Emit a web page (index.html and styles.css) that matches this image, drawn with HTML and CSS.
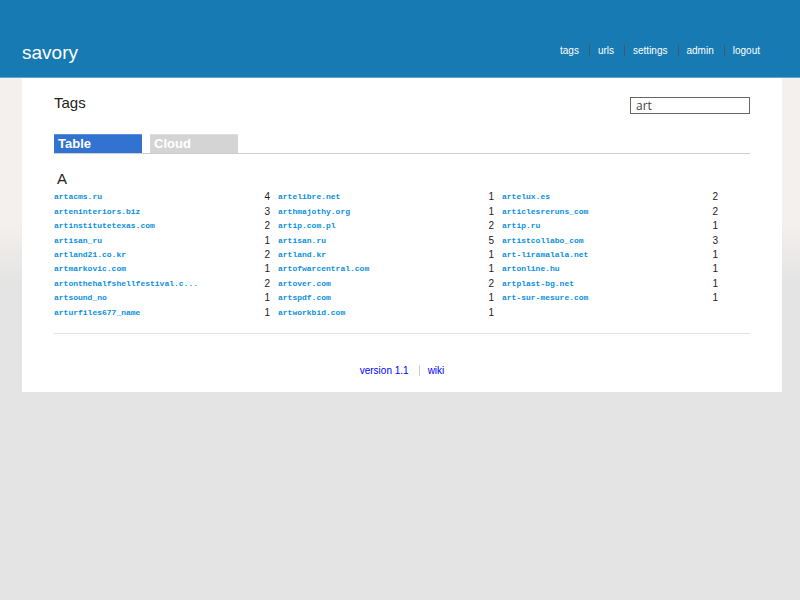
FILE: index.html
```html
<!DOCTYPE html>
<html lang="en">
<head>
<meta charset="utf-8">
<meta name="viewport" content="width=device-width, initial-scale=1">
<title>savory - Tags</title>
<link rel="stylesheet" href="styles.css">
</head>
<body>
<header class="banner">
  <a class="brand" href="#">savory</a>
  <nav class="links">
    <a href="#">tags</a>
    <a href="#">urls</a>
    <a href="#">settings</a>
    <a href="#">admin</a>
    <a href="#">logout</a>
  </nav>
</header>
<main class="page">
  <div class="heading">
    <h1>Tags</h1>
    <input class="search" type="text" value="art" aria-label="Filter tags">
  </div>
  <nav class="tabs">
    <a class="tab active" href="#">Table</a>
    <a class="tab" href="#">Cloud</a>
  </nav>
  <section class="group">
    <h2>A</h2>
    <table class="tags">
      <colgroup><col><col class="count"><col><col class="count"><col><col class="count"></colgroup>
      <tbody>
        <tr><td><a href="#">artacms.ru</a></td><td>4</td><td><a href="#">artelibre.net</a></td><td>1</td><td><a href="#">artelux.es</a></td><td>2</td></tr>
        <tr><td><a href="#">arteninteriors.biz</a></td><td>3</td><td><a href="#">arthmajothy.org</a></td><td>1</td><td><a href="#">articlesreruns_com</a></td><td>2</td></tr>
        <tr><td><a href="#">artinstitutetexas.com</a></td><td>2</td><td><a href="#">artip.com.pl</a></td><td>2</td><td><a href="#">artip.ru</a></td><td>1</td></tr>
        <tr><td><a href="#">artisan_ru</a></td><td>1</td><td><a href="#">artisan.ru</a></td><td>5</td><td><a href="#">artistcollabo_com</a></td><td>3</td></tr>
        <tr><td><a href="#">artland21.co.kr</a></td><td>2</td><td><a href="#">artland.kr</a></td><td>1</td><td><a href="#">art-liramalala.net</a></td><td>1</td></tr>
        <tr><td><a href="#">artmarkovic.com</a></td><td>1</td><td><a href="#">artofwarcentral.com</a></td><td>1</td><td><a href="#">artonline.hu</a></td><td>1</td></tr>
        <tr><td><a href="#">artonthehalfshellfestival.c...</a></td><td>2</td><td><a href="#">artover.com</a></td><td>2</td><td><a href="#">artplast-bg.net</a></td><td>1</td></tr>
        <tr><td><a href="#">artsound_no</a></td><td>1</td><td><a href="#">artspdf.com</a></td><td>1</td><td><a href="#">art-sur-mesure.com</a></td><td>1</td></tr>
        <tr><td><a href="#">arturfiles677_name</a></td><td>1</td><td><a href="#">artworkbid.com</a></td><td>1</td><td></td><td></td></tr>
      </tbody>
    </table>
  </section>
  <footer class="links footer">
    <a href="#">version 1.1</a>
    <a href="#">wiki</a>
  </footer>
</main>
</body>
</html>
```
FILE: styles.css
```css
* {
  box-sizing: border-box;
}

body {
  margin: 0;
  background: linear-gradient(#f4f0ed 222px, #e4e4e4 284px) no-repeat #e4e4e4;
  color: #222;
  font-family: "Liberation Sans", Arial, sans-serif;
  font-size: 10px;
}

a {
  text-decoration: none;
}

h1,
h2 {
  margin: 0;
  font-size: 15px;
  font-weight: normal;
  line-height: 18px;
}

.banner {
  display: flex;
  justify-content: space-between;
  padding: 40px 40px 11px 22px;
  background: #177ab3;
  border-bottom: 1px solid #5fa5cd;
}

.brand {
  color: #fff;
  font-size: 19px;
  line-height: 26px;
}

.links {
  display: flex;
  align-items: center;
  height: 20px;
  line-height: 11px;
}

.links a + a {
  margin-left: 10px;
  padding-left: 8px;
  border-left: 1px solid #3c5a70;
}

.banner .links a {
  color: #fff;
}

.page {
  margin: 0 18px 0 22px;
  padding: 16px 32px 12px;
  background: #fff;
}

.heading {
  display: flex;
  justify-content: space-between;
  align-items: flex-start;
}

.search {
  width: 120px;
  height: 17px;
  margin-top: 3px;
  padding: 0 5px;
  border: 1px solid #666;
  background: #fff;
  color: #444;
  font: 12px/15px "Open Sans", sans-serif;
}

.tabs {
  display: flex;
  gap: 8px;
  margin-top: 20px;
  border-bottom: 1px solid #ccc;
}

.tab {
  width: 88px;
  height: 19px;
  padding-left: 4px;
  border-top: 1px solid #e0e0e0;
  background: #d4d4d4;
  color: #fff;
  font-size: 13px;
  font-weight: bold;
  line-height: 18px;
}

.tab.active {
  border-color: #5b8fdc;
  background: #3273d1;
}

.group {
  padding: 16px 0 13px;
  border-bottom: 1px solid #e4e4e4;
}

.group h2 {
  padding: 0 3px 2px;
}

.tags {
  width: calc(100% - 24px);
  height: 130px;
  table-layout: fixed;
  border-collapse: collapse;
}

.tags .count {
  width: 24px;
}

.tags td {
  padding: 0;
  line-height: 12px;
}

.tags td:nth-child(even) {
  padding-right: 8px;
  text-align: right;
}

.tags a {
  display: block;
  color: #0a90de;
  font-family: "Courier New", "Liberation Mono", monospace;
  font-size: 8px;
  font-weight: bold;
}

.footer {
  justify-content: center;
  margin-top: 26px;
}

.footer a {
  color: #00f;
}

.footer a + a {
  border-color: #ccc;
}
```
